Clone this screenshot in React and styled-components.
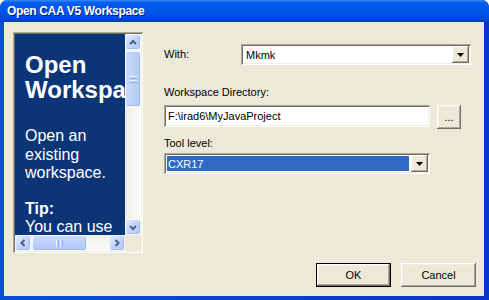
import React from "react";
import styled, { createGlobalStyle } from "styled-components";

const GlobalStyle = createGlobalStyle`
  html, body {
    margin: 0;
    padding: 0;
    background: #ffffff;
  }
  body {
    font-family: "Liberation Sans", Arial, sans-serif;
    font-size: 11px;
    color: #000000;
  }
`;

const raised = `
  box-shadow: inset -1px -1px #716f64, inset 1px 1px #ffffff,
    inset -2px -2px #aca899, inset 2px 2px #f1efe2;
`;

const sunken = `
  box-shadow: inset 1px 1px #aca899, inset -1px -1px #ffffff,
    inset 2px 2px #716f64, inset -2px -2px #f1efe2;
`;

const Window = styled.div`
  width: 489px;
  height: 300px;
  display: flex;
  flex-direction: column;
  background: linear-gradient(to right, #0a4fd8, #0842d0 50%, #0735c4);
  border-radius: 7px 7px 0 0;
  overflow: hidden;
`;

const TitleBar = styled.div`
  height: 22px;
  flex: none;
  display: flex;
  align-items: center;
  padding-left: 7px;
  border-radius: 7px 7px 0 0;
  background: linear-gradient(
    to bottom,
    #3d8cf5 0%,
    #0a62f0 10%,
    #0058ee 25%,
    #0055e5 60%,
    #0049d8 85%,
    #003fc0 100%
  );
  color: #ffffff;
  font-weight: bold;
  font-size: 12px;
  letter-spacing: -0.35px;
  text-shadow: 1px 1px #0a1a8a;
`;

const Client = styled.div`
  flex: 1;
  margin: 0 5px 4px 4px;
  background: #ece9d8;
  display: flex;
  flex-direction: column;
  padding: 10px 8px 9px 9px;
`;

const Content = styled.div`
  display: flex;
  height: 221px;
`;

const Panel = styled.div`
  width: 130px;
  height: 221px;
  box-sizing: border-box;
  padding: 2px;
  ${sunken}
  display: grid;
  grid-template-columns: 110px 16px;
  grid-template-rows: 201px 16px;
`;

const PanelText = styled.div`
  background: #0c3577;
  color: #ffffff;
  overflow: hidden;
  padding: 18px 10px 0 10px;
  font-family: "Liberation Sans", Arial, sans-serif;
`;

const Heading = styled.div`
  font-weight: bold;
  font-size: 24px;
  line-height: 25px;
  white-space: nowrap;
`;

const Para = styled.p`
  margin: ${(p) => (p.$first ? "25px" : "0")} 0 17px;
  font-size: 16px;
  line-height: 18.5px;
  b {
    font-weight: bold;
  }
`;

const Corner = styled.div`
  background: #ece9d8;
`;

const Bar = styled.div`
  display: flex;
  flex-direction: ${(p) => (p.$vertical ? "column" : "row")};
  background: ${(p) =>
    p.$vertical
      ? "linear-gradient(to right, #eeede5, #fdfdfa)"
      : "linear-gradient(to bottom, #eeede5, #fdfdfa)"};
`;

const ArrowBtn = styled.div`
  flex: none;
  width: 16px;
  height: 16px;
  box-sizing: border-box;
  border: 1px solid #f4f7fe;
  border-radius: 3px;
  background: linear-gradient(135deg, #e3ebfe 0%, #c6d6fd 45%, #b2c8f7 100%);
  box-shadow: inset -1px -1px #a7bdec;
  display: flex;
  align-items: center;
  justify-content: center;
`;

const Thumb = styled.div`
  flex: none;
  ${(p) => (p.$vertical ? "height: 56px; width: 16px;" : "width: 55px; height: 16px;")}
  margin: ${(p) => (p.$vertical ? "1px 0 0" : "0 0 0 1px")};
  box-sizing: border-box;
  border: 1px solid #f4f7fe;
  border-radius: 3px;
  background: ${(p) =>
    p.$vertical
      ? "linear-gradient(to right, #cbd9fd, #bccffa 60%, #b2c7f6)"
      : "linear-gradient(to bottom, #cbd9fd, #bccffa 60%, #b2c7f6)"};
  box-shadow: inset -1px -1px #a2b9ec;
  display: flex;
  flex-direction: ${(p) => (p.$vertical ? "column" : "row")};
  align-items: center;
  justify-content: center;
  gap: 1px;
`;

const Grip = styled.span`
  display: block;
  ${(p) => (p.$vertical ? "width: 7px; height: 1px;" : "width: 1px; height: 7px;")}
  background: ${(p) => (p.$dark ? "#8cabf0" : "#eef4fe")};
`;

const Track = styled.div`
  flex: 1;
`;

const Chevron = ({ dir }) => {
  const pts = {
    up: "4,9 7,6 10,9",
    down: "4,6 7,9 10,6",
    left: "8.5,4 5.5,7 8.5,10",
    right: "5.5,4 8.5,7 5.5,10",
  }[dir];
  return (
    <svg width="14" height="14" viewBox="0 0 14 14">
      <polyline points={pts} fill="none" stroke="#4d6185" strokeWidth="2" />
    </svg>
  );
};

const ScrollBar = ({ vertical }) => (
  <Bar $vertical={vertical}>
    <ArrowBtn>
      <Chevron dir={vertical ? "up" : "left"} />
    </ArrowBtn>
    <Thumb $vertical={vertical}>
      <Grip $vertical={vertical} />
      <Grip $vertical={vertical} $dark />
      <Grip $vertical={vertical} />
      <Grip $vertical={vertical} $dark />
    </Thumb>
    <Track />
    <ArrowBtn>
      <Chevron dir={vertical ? "down" : "right"} />
    </ArrowBtn>
  </Bar>
);

const Form = styled.div`
  margin-left: 21px;
  padding-top: 12px;
  display: flex;
  flex-direction: column;
`;

const Row = styled.div`
  display: flex;
  align-items: ${(p) => (p.$center ? "center" : "flex-start")};
  gap: ${(p) => p.$gap || 0}px;
`;

const Label = styled.div`
  line-height: 13px;
  width: ${(p) => (p.$width ? `${p.$width}px` : "auto")};
  margin-top: ${(p) => p.$top || 0}px;
  margin-bottom: ${(p) => p.$bottom || 0}px;
`;

const Combo = styled.div`
  width: ${(p) => p.$width}px;
  height: 21px;
  box-sizing: border-box;
  padding: 2px;
  background: #ffffff;
  ${sunken}
  display: flex;
  align-items: stretch;
`;

const ComboValue = styled.div`
  flex: 1;
  display: flex;
  align-items: center;
  margin: 1px 2px 1px 1px;
  padding-left: ${(p) => (p.$selected ? "1px" : "2px")};
  background: ${(p) => (p.$selected ? "#316ac5" : "transparent")};
  color: ${(p) => (p.$selected ? "#ffffff" : "#000000")};
`;

const DropBtn = styled.div`
  width: 17px;
  flex: none;
  background: #ece9d8;
  ${raised}
  display: flex;
  align-items: center;
  justify-content: center;
`;

const TextField = styled.div`
  width: 266px;
  height: 22px;
  box-sizing: border-box;
  padding: 2px 4px;
  background: #ffffff;
  ${sunken}
  display: flex;
  align-items: center;
`;

const Button = styled.div`
  width: ${(p) => p.$width}px;
  height: ${(p) => p.$height}px;
  box-sizing: border-box;
  background: #ece9d8;
  display: flex;
  align-items: center;
  justify-content: center;
  ${raised}
  ${(p) => (p.$default ? "border: 1px solid #000000;" : "")}
`;

const Footer = styled.div`
  display: flex;
  justify-content: flex-end;
  gap: 10px;
  margin-top: 10px;
`;

const Triangle = () => (
  <svg width="7" height="4" viewBox="0 0 7 4">
    <polygon points="0,0 7,0 3.5,4" fill="#000000" />
  </svg>
);

export default function App() {
  return (
    <>
      <GlobalStyle />
      <Window>
        <TitleBar>Open CAA V5 Workspace</TitleBar>
        <Client>
          <Content>
            <Panel>
              <PanelText>
                <Heading>
                  Open
                  <br />
                  Workspace
                </Heading>
                <Para $first>Open an existing workspace.</Para>
                <Para>
                  <b>Tip:</b>
                  <br />
                  You can use this dialog to open a workspace.
                </Para>
              </PanelText>
              <ScrollBar vertical />
              <ScrollBar />
              <Corner />
            </Panel>
            <Form>
              <Row $center>
                <Label $width={77}>With:</Label>
                <Combo $width={230}>
                  <ComboValue>Mkmk</ComboValue>
                  <DropBtn>
                    <Triangle />
                  </DropBtn>
                </Combo>
              </Row>
              <Label $top={21} $bottom={6}>
                Workspace Directory:
              </Label>
              <Row $gap={7}>
                <TextField>F:\irad6\MyJavaProject</TextField>
                <Button $width={24} $height={24}>
                  ...
                </Button>
              </Row>
              <Label $top={8} $bottom={3}>
                Tool level:
              </Label>
              <Combo $width={266}>
                <ComboValue $selected>CXR17</ComboValue>
                <DropBtn>
                  <Triangle />
                </DropBtn>
              </Combo>
            </Form>
          </Content>
          <Footer>
            <Button $width={75} $height={24} $default>
              OK
            </Button>
            <Button $width={75} $height={24}>
              Cancel
            </Button>
          </Footer>
        </Client>
      </Window>
    </>
  );
}
